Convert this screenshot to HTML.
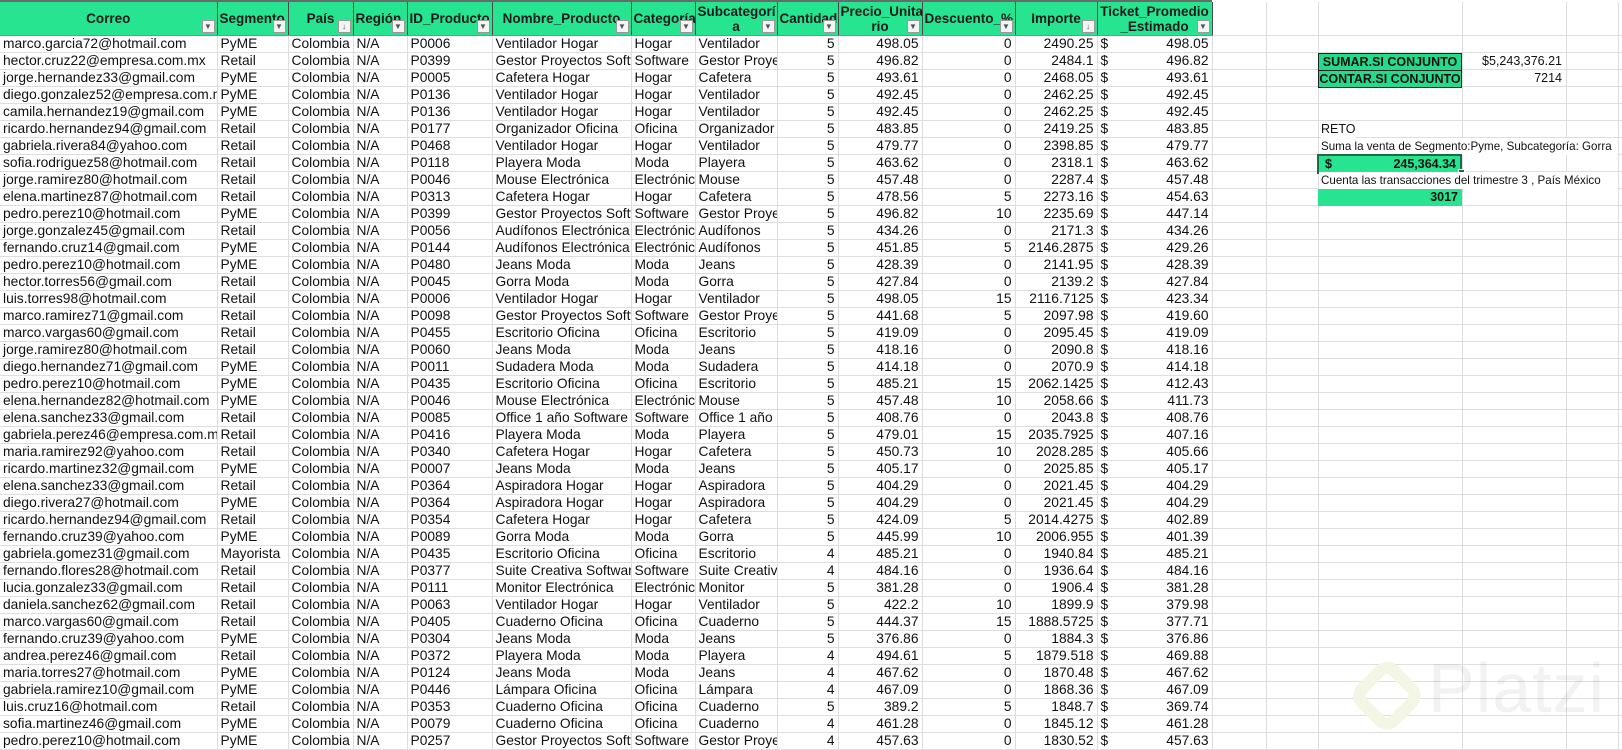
<!DOCTYPE html>
<html><head><meta charset="utf-8"><style>
body{margin:0;width:1622px;height:750px;overflow:hidden;background:#fff;font-family:"Liberation Sans",Arial,sans-serif;font-size:13px;color:#111;position:relative}
#top{position:absolute;left:0;top:0;width:1212px;height:2px;background:#6a6a6a}
table{position:absolute;left:0;top:2px;border-collapse:collapse;table-layout:fixed;width:1622px}
td{border-right:1px solid #dedede;border-bottom:1px solid #dedede;height:16px;padding:0 3px;white-space:nowrap;overflow:hidden;line-height:16px;font-size:13.8px}
tr.h td{height:33px;background:#27e491;border-right:1px solid #4a4a4a;border-bottom:1px solid #8a8a8a;font-weight:bold;text-align:center;line-height:15px;white-space:nowrap;position:relative;padding:0 2px;color:#1b1b1b;font-size:13.5px}
tr.h td.x{background:#fff;border-right:1px solid #dedede;border-bottom:1px solid #dedede}
.f{position:absolute;right:2px;bottom:2px;width:13px;height:13px;background:#f4f4f4;border:1px solid #9a9a9a;box-sizing:border-box;font-size:8px;line-height:12px;color:#555;text-align:center;font-weight:normal}
tr:not(.h) td:nth-child(n+9):nth-child(-n+13){text-align:right}
td span{float:left}
.ov{position:absolute;font-size:12.5px;line-height:17px;white-space:nowrap}
</style></head><body>
<div id="top"></div>
<table>
<colgroup><col style="width:217px"><col style="width:71px"><col style="width:65px"><col style="width:54px"><col style="width:85px"><col style="width:139px"><col style="width:64px"><col style="width:82px"><col style="width:61px"><col style="width:84px"><col style="width:93px"><col style="width:82px"><col style="width:115px"><col style="width:54px"><col style="width:52px"><col style="width:144px"><col style="width:104px"><col style="width:52px"><col style="width:4px"></colgroup>
<tr class="h"><td>Correo<div class="f">▼</div></td><td style="text-align:left">Segmento<div class="f">▼</div></td><td>País<div class="f">↓</div></td><td style="text-align:left">Región<div class="f">▼</div></td><td style="text-align:left">ID_Producto<div class="f">▼</div></td><td>Nombre_Producto<div class="f">▼</div></td><td style="text-align:left">Categoría<div class="f">▼</div></td><td>Subcategorí<br>a<div class="f">▼</div></td><td style="text-align:left">Cantidad<div class="f">▼</div></td><td>Precio_Unita<br>rio<div class="f">▼</div></td><td style="text-align:left">Descuento_%<div class="f">▼</div></td><td>Importe<div class="f">↓</div></td><td>Ticket_Promedio<br>_Estimado<div class="f">▼</div></td><td class="x"></td><td class="x"></td><td class="x"></td><td class="x"></td><td class="x"></td><td class="x"></td></tr>
<tr><td>marco.garcia72@hotmail.com</td><td>PyME</td><td>Colombia</td><td>N/A</td><td>P0006</td><td>Ventilador Hogar</td><td>Hogar</td><td>Ventilador</td><td>5</td><td>498.05</td><td>0</td><td>2490.25</td><td><span>$</span>498.05</td><td></td><td></td><td></td><td></td><td></td><td></td></tr>
<tr><td>hector.cruz22@empresa.com.mx</td><td>Retail</td><td>Colombia</td><td>N/A</td><td>P0399</td><td>Gestor Proyectos Software</td><td>Software</td><td>Gestor Proyectos</td><td>5</td><td>496.82</td><td>0</td><td>2484.1</td><td><span>$</span>496.82</td><td></td><td></td><td></td><td></td><td></td><td></td></tr>
<tr><td>jorge.hernandez33@gmail.com</td><td>PyME</td><td>Colombia</td><td>N/A</td><td>P0005</td><td>Cafetera Hogar</td><td>Hogar</td><td>Cafetera</td><td>5</td><td>493.61</td><td>0</td><td>2468.05</td><td><span>$</span>493.61</td><td></td><td></td><td></td><td></td><td></td><td></td></tr>
<tr><td>diego.gonzalez52@empresa.com.mx</td><td>PyME</td><td>Colombia</td><td>N/A</td><td>P0136</td><td>Ventilador Hogar</td><td>Hogar</td><td>Ventilador</td><td>5</td><td>492.45</td><td>0</td><td>2462.25</td><td><span>$</span>492.45</td><td></td><td></td><td></td><td></td><td></td><td></td></tr>
<tr><td>camila.hernandez19@gmail.com</td><td>PyME</td><td>Colombia</td><td>N/A</td><td>P0136</td><td>Ventilador Hogar</td><td>Hogar</td><td>Ventilador</td><td>5</td><td>492.45</td><td>0</td><td>2462.25</td><td><span>$</span>492.45</td><td></td><td></td><td></td><td></td><td></td><td></td></tr>
<tr><td>ricardo.hernandez94@gmail.com</td><td>Retail</td><td>Colombia</td><td>N/A</td><td>P0177</td><td>Organizador Oficina</td><td>Oficina</td><td>Organizador</td><td>5</td><td>483.85</td><td>0</td><td>2419.25</td><td><span>$</span>483.85</td><td></td><td></td><td></td><td></td><td></td><td></td></tr>
<tr><td>gabriela.rivera84@yahoo.com</td><td>Retail</td><td>Colombia</td><td>N/A</td><td>P0468</td><td>Ventilador Hogar</td><td>Hogar</td><td>Ventilador</td><td>5</td><td>479.77</td><td>0</td><td>2398.85</td><td><span>$</span>479.77</td><td></td><td></td><td></td><td></td><td></td><td></td></tr>
<tr><td>sofia.rodriguez58@hotmail.com</td><td>Retail</td><td>Colombia</td><td>N/A</td><td>P0118</td><td>Playera Moda</td><td>Moda</td><td>Playera</td><td>5</td><td>463.62</td><td>0</td><td>2318.1</td><td><span>$</span>463.62</td><td></td><td></td><td></td><td></td><td></td><td></td></tr>
<tr><td>jorge.ramirez80@hotmail.com</td><td>Retail</td><td>Colombia</td><td>N/A</td><td>P0046</td><td>Mouse Electrónica</td><td>Electrónica</td><td>Mouse</td><td>5</td><td>457.48</td><td>0</td><td>2287.4</td><td><span>$</span>457.48</td><td></td><td></td><td></td><td></td><td></td><td></td></tr>
<tr><td>elena.martinez87@hotmail.com</td><td>Retail</td><td>Colombia</td><td>N/A</td><td>P0313</td><td>Cafetera Hogar</td><td>Hogar</td><td>Cafetera</td><td>5</td><td>478.56</td><td>5</td><td>2273.16</td><td><span>$</span>454.63</td><td></td><td></td><td></td><td></td><td></td><td></td></tr>
<tr><td>pedro.perez10@hotmail.com</td><td>PyME</td><td>Colombia</td><td>N/A</td><td>P0399</td><td>Gestor Proyectos Software</td><td>Software</td><td>Gestor Proyectos</td><td>5</td><td>496.82</td><td>10</td><td>2235.69</td><td><span>$</span>447.14</td><td></td><td></td><td></td><td></td><td></td><td></td></tr>
<tr><td>jorge.gonzalez45@gmail.com</td><td>Retail</td><td>Colombia</td><td>N/A</td><td>P0056</td><td>Audífonos Electrónica</td><td>Electrónica</td><td>Audífonos</td><td>5</td><td>434.26</td><td>0</td><td>2171.3</td><td><span>$</span>434.26</td><td></td><td></td><td></td><td></td><td></td><td></td></tr>
<tr><td>fernando.cruz14@gmail.com</td><td>PyME</td><td>Colombia</td><td>N/A</td><td>P0144</td><td>Audífonos Electrónica</td><td>Electrónica</td><td>Audífonos</td><td>5</td><td>451.85</td><td>5</td><td>2146.2875</td><td><span>$</span>429.26</td><td></td><td></td><td></td><td></td><td></td><td></td></tr>
<tr><td>pedro.perez10@hotmail.com</td><td>PyME</td><td>Colombia</td><td>N/A</td><td>P0480</td><td>Jeans Moda</td><td>Moda</td><td>Jeans</td><td>5</td><td>428.39</td><td>0</td><td>2141.95</td><td><span>$</span>428.39</td><td></td><td></td><td></td><td></td><td></td><td></td></tr>
<tr><td>hector.torres56@gmail.com</td><td>Retail</td><td>Colombia</td><td>N/A</td><td>P0045</td><td>Gorra Moda</td><td>Moda</td><td>Gorra</td><td>5</td><td>427.84</td><td>0</td><td>2139.2</td><td><span>$</span>427.84</td><td></td><td></td><td></td><td></td><td></td><td></td></tr>
<tr><td>luis.torres98@hotmail.com</td><td>Retail</td><td>Colombia</td><td>N/A</td><td>P0006</td><td>Ventilador Hogar</td><td>Hogar</td><td>Ventilador</td><td>5</td><td>498.05</td><td>15</td><td>2116.7125</td><td><span>$</span>423.34</td><td></td><td></td><td></td><td></td><td></td><td></td></tr>
<tr><td>marco.ramirez71@gmail.com</td><td>Retail</td><td>Colombia</td><td>N/A</td><td>P0098</td><td>Gestor Proyectos Software</td><td>Software</td><td>Gestor Proyectos</td><td>5</td><td>441.68</td><td>5</td><td>2097.98</td><td><span>$</span>419.60</td><td></td><td></td><td></td><td></td><td></td><td></td></tr>
<tr><td>marco.vargas60@gmail.com</td><td>Retail</td><td>Colombia</td><td>N/A</td><td>P0455</td><td>Escritorio Oficina</td><td>Oficina</td><td>Escritorio</td><td>5</td><td>419.09</td><td>0</td><td>2095.45</td><td><span>$</span>419.09</td><td></td><td></td><td></td><td></td><td></td><td></td></tr>
<tr><td>jorge.ramirez80@hotmail.com</td><td>Retail</td><td>Colombia</td><td>N/A</td><td>P0060</td><td>Jeans Moda</td><td>Moda</td><td>Jeans</td><td>5</td><td>418.16</td><td>0</td><td>2090.8</td><td><span>$</span>418.16</td><td></td><td></td><td></td><td></td><td></td><td></td></tr>
<tr><td>diego.hernandez71@gmail.com</td><td>PyME</td><td>Colombia</td><td>N/A</td><td>P0011</td><td>Sudadera Moda</td><td>Moda</td><td>Sudadera</td><td>5</td><td>414.18</td><td>0</td><td>2070.9</td><td><span>$</span>414.18</td><td></td><td></td><td></td><td></td><td></td><td></td></tr>
<tr><td>pedro.perez10@hotmail.com</td><td>PyME</td><td>Colombia</td><td>N/A</td><td>P0435</td><td>Escritorio Oficina</td><td>Oficina</td><td>Escritorio</td><td>5</td><td>485.21</td><td>15</td><td>2062.1425</td><td><span>$</span>412.43</td><td></td><td></td><td></td><td></td><td></td><td></td></tr>
<tr><td>elena.hernandez82@hotmail.com</td><td>PyME</td><td>Colombia</td><td>N/A</td><td>P0046</td><td>Mouse Electrónica</td><td>Electrónica</td><td>Mouse</td><td>5</td><td>457.48</td><td>10</td><td>2058.66</td><td><span>$</span>411.73</td><td></td><td></td><td></td><td></td><td></td><td></td></tr>
<tr><td>elena.sanchez33@gmail.com</td><td>Retail</td><td>Colombia</td><td>N/A</td><td>P0085</td><td>Office 1 año Software</td><td>Software</td><td>Office 1 año</td><td>5</td><td>408.76</td><td>0</td><td>2043.8</td><td><span>$</span>408.76</td><td></td><td></td><td></td><td></td><td></td><td></td></tr>
<tr><td>gabriela.perez46@empresa.com.mx</td><td>Retail</td><td>Colombia</td><td>N/A</td><td>P0416</td><td>Playera Moda</td><td>Moda</td><td>Playera</td><td>5</td><td>479.01</td><td>15</td><td>2035.7925</td><td><span>$</span>407.16</td><td></td><td></td><td></td><td></td><td></td><td></td></tr>
<tr><td>maria.ramirez92@yahoo.com</td><td>Retail</td><td>Colombia</td><td>N/A</td><td>P0340</td><td>Cafetera Hogar</td><td>Hogar</td><td>Cafetera</td><td>5</td><td>450.73</td><td>10</td><td>2028.285</td><td><span>$</span>405.66</td><td></td><td></td><td></td><td></td><td></td><td></td></tr>
<tr><td>ricardo.martinez32@gmail.com</td><td>PyME</td><td>Colombia</td><td>N/A</td><td>P0007</td><td>Jeans Moda</td><td>Moda</td><td>Jeans</td><td>5</td><td>405.17</td><td>0</td><td>2025.85</td><td><span>$</span>405.17</td><td></td><td></td><td></td><td></td><td></td><td></td></tr>
<tr><td>elena.sanchez33@gmail.com</td><td>Retail</td><td>Colombia</td><td>N/A</td><td>P0364</td><td>Aspiradora Hogar</td><td>Hogar</td><td>Aspiradora</td><td>5</td><td>404.29</td><td>0</td><td>2021.45</td><td><span>$</span>404.29</td><td></td><td></td><td></td><td></td><td></td><td></td></tr>
<tr><td>diego.rivera27@hotmail.com</td><td>PyME</td><td>Colombia</td><td>N/A</td><td>P0364</td><td>Aspiradora Hogar</td><td>Hogar</td><td>Aspiradora</td><td>5</td><td>404.29</td><td>0</td><td>2021.45</td><td><span>$</span>404.29</td><td></td><td></td><td></td><td></td><td></td><td></td></tr>
<tr><td>ricardo.hernandez94@gmail.com</td><td>Retail</td><td>Colombia</td><td>N/A</td><td>P0354</td><td>Cafetera Hogar</td><td>Hogar</td><td>Cafetera</td><td>5</td><td>424.09</td><td>5</td><td>2014.4275</td><td><span>$</span>402.89</td><td></td><td></td><td></td><td></td><td></td><td></td></tr>
<tr><td>fernando.cruz39@yahoo.com</td><td>PyME</td><td>Colombia</td><td>N/A</td><td>P0089</td><td>Gorra Moda</td><td>Moda</td><td>Gorra</td><td>5</td><td>445.99</td><td>10</td><td>2006.955</td><td><span>$</span>401.39</td><td></td><td></td><td></td><td></td><td></td><td></td></tr>
<tr><td>gabriela.gomez31@gmail.com</td><td>Mayorista</td><td>Colombia</td><td>N/A</td><td>P0435</td><td>Escritorio Oficina</td><td>Oficina</td><td>Escritorio</td><td>4</td><td>485.21</td><td>0</td><td>1940.84</td><td><span>$</span>485.21</td><td></td><td></td><td></td><td></td><td></td><td></td></tr>
<tr><td>fernando.flores28@hotmail.com</td><td>Retail</td><td>Colombia</td><td>N/A</td><td>P0377</td><td>Suite Creativa Software</td><td>Software</td><td>Suite Creativa</td><td>4</td><td>484.16</td><td>0</td><td>1936.64</td><td><span>$</span>484.16</td><td></td><td></td><td></td><td></td><td></td><td></td></tr>
<tr><td>lucia.gonzalez33@gmail.com</td><td>Retail</td><td>Colombia</td><td>N/A</td><td>P0111</td><td>Monitor Electrónica</td><td>Electrónica</td><td>Monitor</td><td>5</td><td>381.28</td><td>0</td><td>1906.4</td><td><span>$</span>381.28</td><td></td><td></td><td></td><td></td><td></td><td></td></tr>
<tr><td>daniela.sanchez62@gmail.com</td><td>Retail</td><td>Colombia</td><td>N/A</td><td>P0063</td><td>Ventilador Hogar</td><td>Hogar</td><td>Ventilador</td><td>5</td><td>422.2</td><td>10</td><td>1899.9</td><td><span>$</span>379.98</td><td></td><td></td><td></td><td></td><td></td><td></td></tr>
<tr><td>marco.vargas60@gmail.com</td><td>Retail</td><td>Colombia</td><td>N/A</td><td>P0405</td><td>Cuaderno Oficina</td><td>Oficina</td><td>Cuaderno</td><td>5</td><td>444.37</td><td>15</td><td>1888.5725</td><td><span>$</span>377.71</td><td></td><td></td><td></td><td></td><td></td><td></td></tr>
<tr><td>fernando.cruz39@yahoo.com</td><td>PyME</td><td>Colombia</td><td>N/A</td><td>P0304</td><td>Jeans Moda</td><td>Moda</td><td>Jeans</td><td>5</td><td>376.86</td><td>0</td><td>1884.3</td><td><span>$</span>376.86</td><td></td><td></td><td></td><td></td><td></td><td></td></tr>
<tr><td>andrea.perez46@gmail.com</td><td>Retail</td><td>Colombia</td><td>N/A</td><td>P0372</td><td>Playera Moda</td><td>Moda</td><td>Playera</td><td>4</td><td>494.61</td><td>5</td><td>1879.518</td><td><span>$</span>469.88</td><td></td><td></td><td></td><td></td><td></td><td></td></tr>
<tr><td>maria.torres27@hotmail.com</td><td>PyME</td><td>Colombia</td><td>N/A</td><td>P0124</td><td>Jeans Moda</td><td>Moda</td><td>Jeans</td><td>4</td><td>467.62</td><td>0</td><td>1870.48</td><td><span>$</span>467.62</td><td></td><td></td><td></td><td></td><td></td><td></td></tr>
<tr><td>gabriela.ramirez10@gmail.com</td><td>PyME</td><td>Colombia</td><td>N/A</td><td>P0446</td><td>Lámpara Oficina</td><td>Oficina</td><td>Lámpara</td><td>4</td><td>467.09</td><td>0</td><td>1868.36</td><td><span>$</span>467.09</td><td></td><td></td><td></td><td></td><td></td><td></td></tr>
<tr><td>luis.cruz16@hotmail.com</td><td>Retail</td><td>Colombia</td><td>N/A</td><td>P0353</td><td>Cuaderno Oficina</td><td>Oficina</td><td>Cuaderno</td><td>5</td><td>389.2</td><td>5</td><td>1848.7</td><td><span>$</span>369.74</td><td></td><td></td><td></td><td></td><td></td><td></td></tr>
<tr><td>sofia.martinez46@gmail.com</td><td>PyME</td><td>Colombia</td><td>N/A</td><td>P0079</td><td>Cuaderno Oficina</td><td>Oficina</td><td>Cuaderno</td><td>4</td><td>461.28</td><td>0</td><td>1845.12</td><td><span>$</span>461.28</td><td></td><td></td><td></td><td></td><td></td><td></td></tr>
<tr><td>pedro.perez10@hotmail.com</td><td>PyME</td><td>Colombia</td><td>N/A</td><td>P0257</td><td>Gestor Proyectos Software</td><td>Software</td><td>Gestor Proyectos</td><td>4</td><td>457.63</td><td>0</td><td>1830.52</td><td><span>$</span>457.63</td><td></td><td></td><td></td><td></td><td></td><td></td></tr>
</table>

<div class="ov" style="left:1318px;top:53px;width:142px;height:16px;background:#27d98a;border:1px solid #222;font-weight:bold;text-align:center;line-height:16px">SUMAR.SI CONJUNTO</div>
<div class="ov" style="left:1318px;top:70px;width:142px;height:16px;background:#27d98a;border:1px solid #222;font-weight:bold;text-align:center;line-height:16px">CONTAR.SI CONJUNTO</div>
<div class="ov" style="left:1462px;top:53px;width:100px;text-align:right">$5,243,376.21</div>
<div class="ov" style="left:1462px;top:70px;width:100px;text-align:right">7214</div>
<div class="ov" style="left:1321px;top:121px;background:#fff">RETO</div>
<div class="ov" style="left:1319px;top:138px;background:#fff;padding-left:2px;width:297px;overflow:hidden;font-size:11.6px">Suma la venta de Segmento:Pyme, Subcategoría: Gorra</div>
<div class="ov" style="left:1317px;top:154px;width:141px;height:16px;background:#27e491;border:2px solid #1e6b42;font-weight:bold;line-height:16px"><span style="float:left;padding-left:6px">$</span><span style="float:right;padding-right:4px">245,364.34</span></div>
<div style="position:absolute;left:1458px;top:169px;width:5px;height:5px;background:#1e6b42;border:1px solid #fff"></div>
<div class="ov" style="left:1319px;top:172px;background:#fff;padding-left:2px;width:297px;overflow:hidden;font-size:11.6px">Cuenta las transacciones del trimestre 3 , País México</div>
<div class="ov" style="left:1318px;top:189px;width:144px;height:17px;background:#27e491;font-weight:bold;text-align:right"><span style="padding-right:4px">3017</span></div>

<svg style="position:absolute;left:1345px;top:648px" width="80" height="95"><rect x="20" y="25" width="45" height="45" rx="10" transform="rotate(45 42 47)" fill="none" stroke="#f3f6e4" stroke-width="12"/></svg>
<div style="position:absolute;left:1428px;top:648px;font-size:70px;color:rgba(0,0,0,0.05);font-family:'Liberation Sans',sans-serif;letter-spacing:1px">Platzi</div>
</body></html>
